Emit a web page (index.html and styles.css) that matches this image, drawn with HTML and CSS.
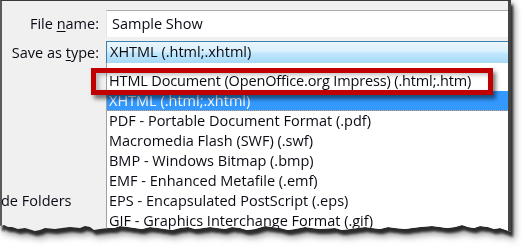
FILE: index.html
```html
<!DOCTYPE html>
<html lang="en">
<head>
	<meta charset="UTF-8" />
	<title>Save as type</title>
	<link rel="stylesheet" href="styles.css">
</head>
<body>
	<div class="page">
		<div class="shot">
			<div class="dialog">
				<div class="row">
					<div class="label">File <u>n</u>ame:</div>
					<div class="field">Sample Show</div>
				</div>
				<div class="row row_type">
					<div class="label">Save as <u>t</u>ype:</div>
					<div class="combo">XHTML (.html;.xhtml)</div>
				</div>
				<div class="lower">
					<div class="side">
						<div class="hide">de Folders</div>
					</div>
					<div class="list">
						<div class="item">HTML Document (OpenOffice.org Impress) (.html;.htm)</div>
						<div class="item selected">XHTML (.html;.xhtml)</div>
						<div class="item">PDF - Portable Document Format (.pdf)</div>
						<div class="item">Macromedia Flash (SWF) (.swf)</div>
						<div class="item">BMP - Windows Bitmap (.bmp)</div>
						<div class="item">EMF - Enhanced Metafile (.emf)</div>
						<div class="item">EPS - Encapsulated PostScript (.eps)</div>
						<div class="item">GIF - Graphics Interchange Format (.gif)</div>
					</div>
				</div>
			</div>
		</div>
		<div class="callout"></div>
	</div>
</body>
</html>
```

FILE: styles.css
```css
body{
	margin: 0;
	background: #fff;
	font-family: "Open Sans", "Noto Sans", sans-serif;
	font-size: 14.5px;
	color: #0a0a14;
}

.page{
	position: relative;
	width: 525px;
	height: 252px;
	overflow: hidden;
}

/* shadow follows the torn edge */
.shot{
	width: 511px;
	filter: drop-shadow(2px 5px 1px rgba(0,0,0,0.7)) drop-shadow(2px 3px 3px rgba(0,0,0,0.5));
}

.dialog{
	height: 236px;
	box-sizing: border-box;
	background: #f0f0f0;
	border-top: 1px solid #3a3a3a;
	border-left: 2px solid #5a5a5a;
	border-right: 3px solid #444;
	padding-top: 9px;
	clip-path: polygon(0 0, 511px 0, 511px 232px, 506px 230px, 500px 228px, 494px 229px, 488px 227px, 480px 226px, 474px 228px, 468px 227px, 462px 225px, 455px 227px, 447px 228px, 440px 227px, 432px 226px, 420px 227px, 412px 228px, 405px 229px, 395px 228px, 388px 227px, 380px 229px, 372px 228px, 365px 227px, 350px 229px, 342px 230px, 335px 228px, 320px 229px, 312px 228px, 305px 227px, 295px 229px, 288px 230px, 280px 228px, 272px 227px, 265px 226px, 255px 229px, 247px 230px, 240px 228px, 232px 227px, 225px 229px, 210px 227px, 203px 228px, 195px 229px, 188px 227px, 180px 228px, 172px 230px, 165px 229px, 158px 228px, 150px 227px, 142px 229px, 135px 228px, 128px 227px, 120px 226px, 114px 228px, 108px 228px, 100px 229px, 94px 230px, 90px 227px, 85px 226px, 80px 228px, 70px 227px, 62px 228px, 55px 229px, 45px 228px, 40px 230px, 35px 231px, 25px 228px, 18px 229px, 12px 227px, 8px 227px, 4px 225px, 0 226px);
}

.row{
	display: flex;
	align-items: center;
	height: 27px;
}

.row_type{
	margin-top: 4px;
	height: 22px;
}

.label{
	width: 104px;
	box-sizing: border-box;
	padding-right: 7px;
	text-align: right;
	white-space: nowrap;
}

.label u{
	text-decoration-thickness: 1px;
	text-underline-offset: 2px;
}

.field{
	flex: 1;
	height: 27px;
	box-sizing: border-box;
	background: #fff;
	border-top: 1px solid #ababab;
	border-left: 1px solid #e3e3e3;
	padding-left: 5px;
	line-height: 25px;
}

.combo{
	flex: 1;
	height: 22px;
	box-sizing: border-box;
	border-top: 1px solid #3c7fb1;
	border-left: 1px solid #3c7fb1;
	background: linear-gradient(#eaf6fd, #d9f0fc 45%, #bee6fd 55%, #a7d9f5);
	padding-left: 3px;
	line-height: 20px;
}

.lower{
	display: flex;
	height: 173px;
}

.side{
	width: 104px;
	padding-top: 128px;
	box-sizing: border-box;
}

.hide{
	margin-left: -1px;
	line-height: 20px;
	white-space: nowrap;
}

.list{
	flex: 1;
	background: #fff;
	border-left: 1px solid #a0a0a0;
	padding-top: 8px;
}

.item{
	height: 20px;
	line-height: 20px;
	padding-left: 2px;
	white-space: nowrap;
}

.item:first-child{
	letter-spacing: -0.15px;
}

.selected{
	background: #3399ff;
	color: #fff;
	box-sizing: border-box;
	border-bottom: 1px dotted #e8a060;
}

.callout{
	position: absolute;
	left: 91px;
	top: 68px;
	width: 402px;
	height: 27px;
	box-sizing: border-box;
	border: 5px solid #c00000;
	box-shadow: 3px 4px 4px rgba(0,0,0,0.5), inset 3px 2px 4px rgba(0,0,0,0.25);
}
```
